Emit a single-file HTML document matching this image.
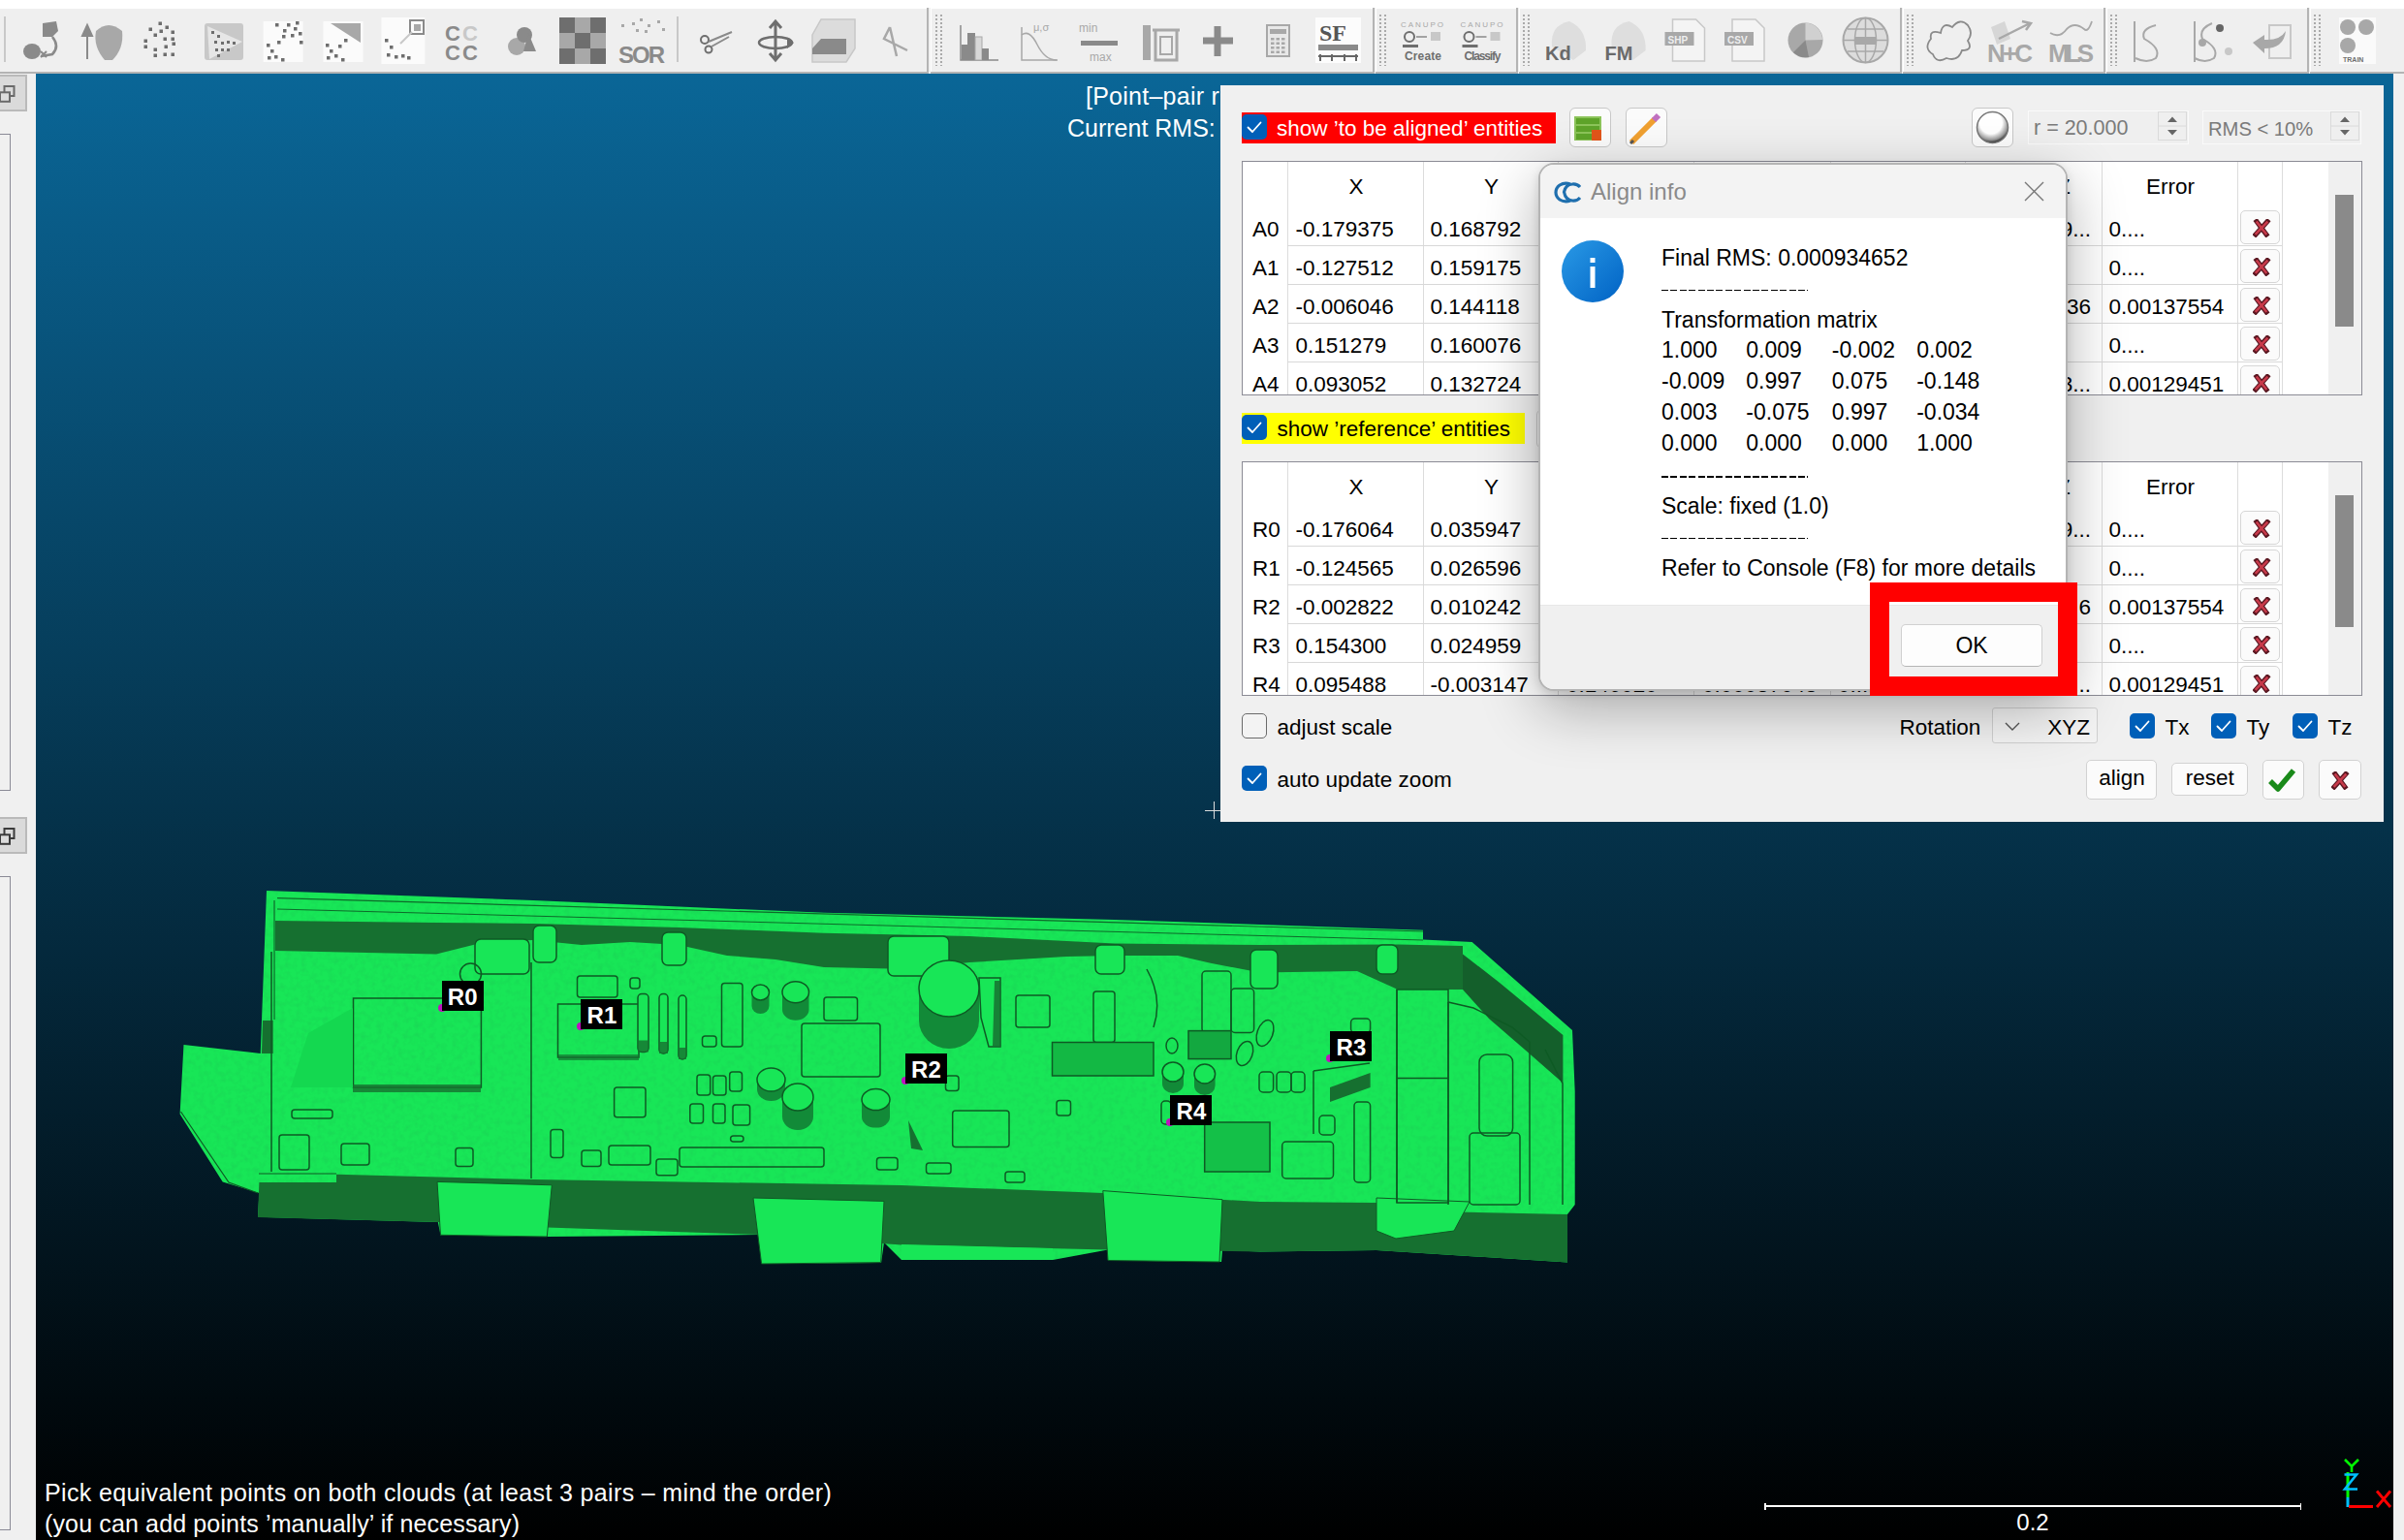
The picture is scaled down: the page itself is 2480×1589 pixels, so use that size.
<!DOCTYPE html>
<html><head><meta charset="utf-8">
<style>
*{box-sizing:border-box;margin:0;padding:0}
html,body{width:2480px;height:1589px;overflow:hidden;background:#f0f0f0;font-family:"Liberation Sans",sans-serif;color:#000;position:relative}
.a{position:absolute}
.t{position:absolute;line-height:1;white-space:nowrap}
.tb{position:absolute;top:8px;height:68px;background:#efefef;border-bottom:2px solid #b4b4b4;border-right:2px solid #b4b4b4;box-shadow:inset 1px 1px 0 #fff}
.hd{position:absolute;top:15px;width:7px;height:53px;background-image:radial-gradient(circle at 1px 1px,#a8a8a8 0.7px,transparent 0.9px);background-size:5px 4px}
.chk{position:absolute;width:26px;height:26px;border-radius:5px;background:#005fb8}
.btn{position:absolute;background:#fdfdfd;border:1px solid #d4d4d4;border-bottom-color:#bdbdbd;border-radius:5px}
.clip{position:absolute;overflow:hidden}
</style></head><body>

<div class="a" style="left:0.0px;top:0.0px;width:2480.0px;height:8.0px;background:#fff"></div>
<div class="tb" style="left:0px;width:958px;box-shadow:inset 0 1px 0 #fff;"></div>
<div class="tb" style="left:960px;width:458px;"></div>
<div class="tb" style="left:1419px;width:147px;"></div>
<div class="tb" style="left:1567px;width:395px;"></div>
<div class="tb" style="left:1963px;width:209px;"></div>
<div class="tb" style="left:2173px;width:209px;"></div>
<div class="tb" style="left:2383px;width:97px;border-right:none;"></div>
<div class="hd" style="left:965px"></div>
<div class="hd" style="left:1423px"></div>
<div class="hd" style="left:1571px"></div>
<div class="hd" style="left:1967px"></div>
<div class="hd" style="left:2177px"></div>
<div class="hd" style="left:2387px"></div>
<div class="a" style="left:4.0px;top:17.0px;width:2.0px;height:47.0px;background:#c8c8c8"></div>
<div class="a" style="left:698.0px;top:17.0px;width:2.0px;height:47.0px;background:#c8c8c8"></div>
<div class="a" style="left:0.0px;top:76.0px;width:37.0px;height:1513.0px;background:#f0f0f0"></div>
<div class="a" style="left:-2.0px;top:77.0px;width:30.0px;height:38.0px;background:#dadada;border:2px solid #bababa"><svg width="28" height="34" style="position:absolute;left:0;top:0;overflow:visible"><rect x="4.5" y="10" width="10" height="10" fill="none" stroke="#6a6a6a" stroke-width="2"/><rect x="0" y="16.3" width="10" height="9.5" fill="#dcdcdc" stroke="#6a6a6a" stroke-width="2"/></svg></div>
<div class="a" style="left:-2.0px;top:843.0px;width:30.0px;height:38.0px;background:#dadada;border:2px solid #bababa"><svg width="28" height="34" style="position:absolute;left:0;top:0;overflow:visible"><rect x="4.5" y="10" width="10" height="10" fill="none" stroke="#3a3a3a" stroke-width="2"/><rect x="0" y="16.3" width="10" height="9.5" fill="#dcdcdc" stroke="#3a3a3a" stroke-width="2"/></svg></div>
<div class="a" style="left:-2.0px;top:138.0px;width:13.0px;height:678.0px;border:1px solid #8a8a96;background:#f0f0f0"></div>
<div class="a" style="left:-2.0px;top:904.0px;width:13.0px;height:674.5px;border:1px solid #8a8a96;background:#f0f0f0"></div>
<div class="a" style="left:37.0px;top:76.0px;width:2432.0px;height:1513.0px;background:linear-gradient(rgb(10,102,151),rgb(0,0,0));overflow:hidden"></div>
<div class="a" style="left:2469.0px;top:76.0px;width:11.0px;height:1513.0px;background:#f0f0f0"></div>
<svg class="a" style="left:0;top:0" width="2480" height="76" viewBox="0 0 2480 76"><path d="M44 24 L58 22 L60 32 L54 38 L44 38 Z" fill="#8a8a8a"/><ellipse cx="33" cy="53" rx="9" ry="8" fill="#8a8a8a"/><path d="M54 38 Q62 48 54 56 L42 58" fill="none" stroke="#8a8a8a" stroke-width="2.5"/><path d="M42 53 L48 59 M42 59 L48 53" stroke="#8a8a8a" stroke-width="2"/><path d="M90 26 V61 M85 37 L90 26 L95 37 Z" stroke="#8a8a8a" stroke-width="2" fill="#8a8a8a"/><path d="M99 32 Q112 20 126 32 Q128 50 116 62 L108 62 Q96 48 99 32 Z" fill="#a8a8a8"/><rect x="163.5" y="22.5" width="3.5" height="3.5" fill="#6e6e6e"/><rect x="170.5" y="26.5" width="3.5" height="3.5" fill="#6e6e6e"/><rect x="176.5" y="31.5" width="3.5" height="3.5" fill="#6e6e6e"/><rect x="153.5" y="28.5" width="3.5" height="3.5" fill="#6e6e6e"/><rect x="158.5" y="34.5" width="3.5" height="3.5" fill="#6e6e6e"/><rect x="148.5" y="40.5" width="3.5" height="3.5" fill="#6e6e6e"/><rect x="168.5" y="38.5" width="3.5" height="3.5" fill="#6e6e6e"/><rect x="177.5" y="43.5" width="3.5" height="3.5" fill="#6e6e6e"/><rect x="148.5" y="46.5" width="3.5" height="3.5" fill="#6e6e6e"/><rect x="158.5" y="49.5" width="3.5" height="3.5" fill="#6e6e6e"/><rect x="169.5" y="46.5" width="3.5" height="3.5" fill="#6e6e6e"/><rect x="176.5" y="38.5" width="3.5" height="3.5" fill="#6e6e6e"/><rect x="158.5" y="55.5" width="3.5" height="3.5" fill="#6e6e6e"/><rect x="168.5" y="54.5" width="3.5" height="3.5" fill="#6e6e6e"/><rect x="176.5" y="54.5" width="3.5" height="3.5" fill="#6e6e6e"/><rect x="164.5" y="30.5" width="3.5" height="3.5" fill="#6e6e6e"/><rect x="211" y="24" width="40" height="38" rx="3" fill="#c8c8c8"/><path d="M214 27 L250 43 L216 61 Z" fill="#e6e6e6"/><rect x="218" y="32" width="3" height="3" fill="#6e6e6e"/><rect x="224" y="36" width="3" height="3" fill="#6e6e6e"/><rect x="221" y="42" width="3" height="3" fill="#6e6e6e"/><rect x="228" y="43" width="3" height="3" fill="#6e6e6e"/><rect x="234" y="42" width="3" height="3" fill="#6e6e6e"/><rect x="240" y="43" width="3" height="3" fill="#6e6e6e"/><rect x="222" y="50" width="3" height="3" fill="#6e6e6e"/><rect x="228" y="50" width="3" height="3" fill="#6e6e6e"/><rect x="234" y="50" width="3" height="3" fill="#6e6e6e"/><rect x="224" y="56" width="3" height="3" fill="#6e6e6e"/><rect x="271.6" y="22" width="41" height="42" fill="#fbfbfb"/><rect x="333.5" y="22" width="41" height="42" fill="#fbfbfb"/><rect x="393.4" y="18" width="45" height="48" fill="#fbfbfb"/><rect x="284" y="24" width="3.5" height="3.5" fill="#6e6e6e"/><rect x="296" y="24" width="3.5" height="3.5" fill="#6e6e6e"/><rect x="305" y="22" width="3.5" height="3.5" fill="#6e6e6e"/><rect x="292" y="30" width="3.5" height="3.5" fill="#6e6e6e"/><rect x="303" y="28" width="3.5" height="3.5" fill="#6e6e6e"/><rect x="300" y="35" width="3.5" height="3.5" fill="#6e6e6e"/><rect x="308" y="33" width="3.5" height="3.5" fill="#6e6e6e"/><rect x="275" y="45" width="3.5" height="3.5" fill="#6e6e6e"/><rect x="286" y="42" width="3.5" height="3.5" fill="#6e6e6e"/><rect x="291" y="36" width="3.5" height="3.5" fill="#6e6e6e"/><rect x="279" y="51" width="3.5" height="3.5" fill="#6e6e6e"/><rect x="276" y="58" width="3.5" height="3.5" fill="#6e6e6e"/><rect x="283" y="57" width="3.5" height="3.5" fill="#6e6e6e"/><rect x="290" y="60" width="3.5" height="3.5" fill="#6e6e6e"/><rect x="309" y="42" width="3.5" height="3.5" fill="#6e6e6e"/><path d="M341 24 L372 24 L372 44 Z" fill="#a8a8a8"/><rect x="336" y="45" width="3.5" height="3.5" fill="#6e6e6e"/><rect x="340" y="51" width="3.5" height="3.5" fill="#6e6e6e"/><rect x="337" y="58" width="3.5" height="3.5" fill="#6e6e6e"/><rect x="345" y="56" width="3.5" height="3.5" fill="#6e6e6e"/><rect x="352" y="60" width="3.5" height="3.5" fill="#6e6e6e"/><rect x="349" y="46" width="3.5" height="3.5" fill="#6e6e6e"/><rect x="355" y="40" width="3.5" height="3.5" fill="#6e6e6e"/><rect x="423" y="21" width="14" height="14" fill="none" stroke="#8a8a8a" stroke-width="2"/><rect x="427" y="25" width="7" height="7" fill="#a8a8a8"/><path d="M413 45 L425 33" stroke="#c8c8c8" stroke-width="2"/><rect x="397" y="40" width="3.5" height="3.5" fill="#6e6e6e"/><rect x="402" y="47" width="3.5" height="3.5" fill="#6e6e6e"/><rect x="399" y="55" width="3.5" height="3.5" fill="#6e6e6e"/><rect x="407" y="57" width="3.5" height="3.5" fill="#6e6e6e"/><rect x="414" y="56" width="3.5" height="3.5" fill="#6e6e6e"/><rect x="420" y="58" width="3.5" height="3.5" fill="#6e6e6e"/><text x="459" y="42" font-family="Liberation Sans" font-weight="bold" font-size="22" fill="#8a8a8a">C</text><text x="477" y="42" font-family="Liberation Sans" font-weight="bold" font-size="22" fill="#c8c8c8">C</text><text x="459" y="62" font-family="Liberation Sans" font-weight="bold" font-size="22" fill="#8a8a8a" textLength="34">CC</text><circle cx="533" cy="48" r="9" fill="#a8a8a8"/><circle cx="541" cy="36" r="8" fill="#8a8a8a"/><path d="M545 34 L553 53 L540 53 Z" fill="#8a8a8a"/><rect x="577" y="18" width="16" height="16" fill="#6e6e6e"/><rect x="577" y="34" width="16" height="16" fill="#a8a8a8"/><rect x="577" y="50" width="16" height="16" fill="#6e6e6e"/><rect x="593" y="18" width="16" height="16" fill="#a8a8a8"/><rect x="593" y="34" width="16" height="16" fill="#6e6e6e"/><rect x="593" y="50" width="16" height="16" fill="#a8a8a8"/><rect x="609" y="18" width="16" height="16" fill="#6e6e6e"/><rect x="609" y="34" width="16" height="16" fill="#a8a8a8"/><rect x="609" y="50" width="16" height="16" fill="#6e6e6e"/><text x="638" y="65" font-family="Liberation Sans" font-weight="bold" font-size="24" fill="#8a8a8a" textLength="48">SOR</text><rect x="641" y="25" width="3" height="3" fill="#a8a8a8"/><rect x="652" y="23" width="3" height="3" fill="#a8a8a8"/><rect x="660" y="19" width="3" height="3" fill="#a8a8a8"/><rect x="668" y="25" width="3" height="3" fill="#a8a8a8"/><rect x="678" y="21" width="3" height="3" fill="#a8a8a8"/><rect x="665" y="31" width="3" height="3" fill="#a8a8a8"/><rect x="656" y="30" width="3" height="3" fill="#a8a8a8"/><rect x="683" y="29" width="3" height="3" fill="#a8a8a8"/><circle cx="727" cy="41" r="4" fill="none" stroke="#6e6e6e" stroke-width="2"/><circle cx="731" cy="51" r="3.5" fill="none" stroke="#6e6e6e" stroke-width="2"/><path d="M731 43 L755 33 M734 48 L752 38" stroke="#8a8a8a" stroke-width="2"/><path d="M800 22 V62 M794 29 L800 22 L806 29 M794 55 L800 62 L806 55" fill="none" stroke="#6e6e6e" stroke-width="3"/><ellipse cx="800" cy="44" rx="17" ry="6" fill="none" stroke="#6e6e6e" stroke-width="2.5"/><path d="M812 40 L819 44 L812 50 Z" fill="#6e6e6e"/><path d="M838 36 L847 20 L882 20 L882 50 L873 64 L838 64 Z" fill="#dcdcdc" stroke="#c8c8c8" stroke-width="1.5"/><path d="M838 50 L847 40 L873 40 L873 56 L838 56 Z" fill="#8a8a8a"/><path d="M918 28 L912 40 L936 52 M918 28 L925 58" fill="none" stroke="#a8a8a8" stroke-width="2.5"/><path d="M991 26 V62 H1030" fill="none" stroke="#8a8a8a" stroke-width="1.5"/><rect x="992" y="46" width="6" height="16" fill="#8a8a8a"/><rect x="998" y="34" width="8" height="28" fill="#8a8a8a"/><rect x="1006" y="38" width="7" height="24" fill="#d8d8d8" stroke="#a8a8a8"/><rect x="1013" y="50" width="7" height="12" fill="#8a8a8a"/><path d="M1054 28 V62 H1091" fill="none" stroke="#a8a8a8" stroke-width="1.5"/><path d="M1054 36 Q1062 30 1070 46 Q1078 62 1090 62" fill="none" stroke="#a8a8a8" stroke-width="1.5"/><text x="1066" y="32" font-size="11" fill="#a8a8a8" font-family="Liberation Sans">&#956;,&#963;</text><text x="1113" y="33" font-size="12" fill="#a8a8a8" font-family="Liberation Sans">min</text><text x="1124" y="63" font-size="12" fill="#a8a8a8" font-family="Liberation Sans">max</text><rect x="1115" y="42" width="38" height="5" fill="#8a8a8a"/><rect x="1179" y="26" width="8" height="36" fill="#a8a8a8"/><path d="M1189 31 H1217 M1192 31 V62 H1214 V31" fill="none" stroke="#a8a8a8" stroke-width="3"/><rect x="1197" y="38" width="12" height="18" fill="none" stroke="#a8a8a8" stroke-width="2"/><path d="M1256 27 V58 M1241 42 H1272" stroke="#8a8a8a" stroke-width="7"/><rect x="1307" y="26" width="23" height="32" fill="#e8e8e8" stroke="#a8a8a8" stroke-width="2"/><rect x="1310" y="30" width="17" height="5" fill="#a8a8a8"/><rect x="1311.0" y="39.0" width="3.5" height="2.5" fill="#a8a8a8"/><rect x="1311.0" y="43.5" width="3.5" height="2.5" fill="#a8a8a8"/><rect x="1311.0" y="48.0" width="3.5" height="2.5" fill="#a8a8a8"/><rect x="1311.0" y="52.5" width="3.5" height="2.5" fill="#a8a8a8"/><rect x="1316.5" y="39.0" width="3.5" height="2.5" fill="#a8a8a8"/><rect x="1316.5" y="43.5" width="3.5" height="2.5" fill="#a8a8a8"/><rect x="1316.5" y="48.0" width="3.5" height="2.5" fill="#a8a8a8"/><rect x="1316.5" y="52.5" width="3.5" height="2.5" fill="#a8a8a8"/><rect x="1322.0" y="39.0" width="3.5" height="2.5" fill="#a8a8a8"/><rect x="1322.0" y="43.5" width="3.5" height="2.5" fill="#a8a8a8"/><rect x="1322.0" y="48.0" width="3.5" height="2.5" fill="#a8a8a8"/><rect x="1322.0" y="52.5" width="3.5" height="2.5" fill="#a8a8a8"/><rect x="1357" y="18" width="47" height="47" fill="#fcfcfc"/><text x="1361" y="42" font-family="Liberation Serif" font-weight="bold" font-size="24" fill="#555">SF</text><rect x="1360" y="46" width="41" height="6" fill="#8a8a8a"/><path d="M1360 58 H1401 M1362 56 V63 M1374 56 V63 M1387 56 V63 M1399 56 V63" stroke="#666" stroke-width="2"/><text x="1445" y="28" font-size="8" fill="#a8a8a8" font-family="Liberation Sans" textLength="44">CANUPO</text><rect x="1449" y="33" width="10" height="10" rx="5" fill="none" stroke="#6e6e6e" stroke-width="2"/><path d="M1461 38 H1472" stroke="#8a8a8a" stroke-width="1.5"/><rect x="1476" y="33" width="10" height="9" fill="#c8c8c8"/><rect x="1447" y="46" width="16" height="3" fill="#6e6e6e"/><text x="1449" y="62" font-size="12" font-weight="bold" fill="#6e6e6e" font-family="Liberation Sans" textLength="38">Create</text><text x="1506.5" y="28" font-size="8" fill="#a8a8a8" font-family="Liberation Sans" textLength="44">CANUPO</text><rect x="1510.5" y="33" width="10" height="10" rx="5" fill="none" stroke="#6e6e6e" stroke-width="2"/><path d="M1522.5 38 H1533.5" stroke="#8a8a8a" stroke-width="1.5"/><rect x="1537.5" y="33" width="10" height="9" fill="#c8c8c8"/><rect x="1508.5" y="46" width="16" height="3" fill="#6e6e6e"/><text x="1510.5" y="62" font-size="12" font-weight="bold" fill="#6e6e6e" font-family="Liberation Sans" textLength="38">Classify</text><path d="M1601 48 Q1599 26 1619 22 Q1637 30 1636 52 L1623 62 Z" fill="#dedede"/><text x="1594" y="62" font-size="20" font-weight="bold" fill="#6a6a6a" font-family="Liberation Sans">Kd</text><path d="M1662.6 48 Q1660.6 26 1680.6 22 Q1698.6 30 1697.6 52 L1684.6 62 Z" fill="#dedede"/><text x="1655.6" y="62" font-size="20" font-weight="bold" fill="#6a6a6a" font-family="Liberation Sans">FM</text><path d="M1725.5 20 H1749.5 L1758.5 29 V63 H1725.5 Z" fill="#f4f4f4" stroke="#c8c8c8" stroke-width="1.5"/><rect x="1717.5" y="33" width="30" height="14" fill="#a8a8a8"/><text x="1720.5" y="45" font-size="10" fill="#eee" font-family="Liberation Sans" font-weight="bold">SHP</text><path d="M1787 20 H1811 L1820 29 V63 H1787 Z" fill="#f4f4f4" stroke="#c8c8c8" stroke-width="1.5"/><rect x="1779" y="33" width="30" height="14" fill="#a8a8a8"/><text x="1782" y="45" font-size="10" fill="#eee" font-family="Liberation Sans" font-weight="bold">CSV</text><circle cx="1862.5" cy="41.5" r="18" fill="#a8a8a8"/><path d="M1862.5 41.5 L1862.5 23.5 A18 18 0 0 1 1880 41 Z" fill="#d0d0d0"/><path d="M1862.5 41.5 L1850 54 A18 18 0 0 0 1866 59 Z" fill="#8a8a8a"/><circle cx="1924.5" cy="41.5" r="23" fill="#dcdcdc" stroke="#a8a8a8" stroke-width="2"/><path d="M1902 41.5 H1947 M1924.5 19 V64 M1906 30 H1943 M1906 53 H1943" stroke="#a8a8a8" stroke-width="1.5"/><ellipse cx="1924.5" cy="41.5" rx="11" ry="23" fill="none" stroke="#a8a8a8" stroke-width="1.5"/><rect x="1914" y="38" width="21" height="8" fill="#a8a8a8"/><path d="M1992 40 Q1990 30 2002 34 Q2004 22 2014 28 Q2022 18 2030 26 Q2036 34 2030 42 Q2036 52 2024 52 Q2020 64 2008 60 Q1998 66 1994 56 Q1984 50 1992 40 Z" fill="none" stroke="#8a8a8a" stroke-width="1.8"/><path d="M2054 28 L2068 22 L2074 40 L2060 46 Z" fill="#d6d6d6"/><path d="M2062 40 L2094 24 M2086 22 L2095 24 L2090 31" fill="none" stroke="#a8a8a8" stroke-width="2.5"/><text x="2050" y="64" font-size="26" font-weight="bold" fill="#a8a8a8" font-family="Liberation Sans" textLength="47">N+C</text><path d="M2115 34 Q2125 40 2132 30 Q2140 22 2150 30 Q2154 34 2158 22" fill="none" stroke="#a8a8a8" stroke-width="1.8"/><text x="2113" y="64" font-size="26" font-weight="bold" fill="#a8a8a8" font-family="Liberation Sans" textLength="47">MLS</text><path d="M2202 22 V64 M2224 26 Q2208 30 2212 40 Q2230 50 2224 60 Q2215 66 2203 60" fill="none" stroke="#a8a8a8" stroke-width="2"/><path d="M2264 22 V64 M2282 24 Q2268 30 2272 40 Q2290 50 2284 60 Q2275 66 2264 60" fill="none" stroke="#a8a8a8" stroke-width="2"/><circle cx="2290" cy="29" r="4" fill="#666"/><circle cx="2272" cy="44" r="4" fill="#a8a8a8"/><circle cx="2299" cy="53" r="4" fill="#c8c8c8"/><rect x="2341" y="26" width="22" height="34" fill="none" stroke="#c8c8c8" stroke-width="2"/><path d="M2324 44 L2336 36 V41 Q2352 42 2358 32 Q2356 50 2336 50 V55 Z" fill="#a8a8a8"/><rect x="2413" y="18" width="38" height="48" fill="#fafafa"/><circle cx="2422" cy="28" r="8" fill="#a8a8a8"/><circle cx="2441" cy="28" r="8" fill="#a8a8a8"/><circle cx="2422" cy="47" r="8" fill="#a8a8a8"/><text x="2417" y="64" font-size="7" fill="#6e6e6e" font-family="Liberation Sans" font-weight="bold">TRAIN</text></svg>
<div class="t" style="left:1120.0px;top:86.8px;font-size:25px;color:#fff;letter-spacing:0.25px">[Point&#8211;pair r</div>
<div class="t" style="left:1101.0px;top:120.0px;font-size:25px;color:#fff;">Current RMS:</div>
<div class="t" style="left:46.0px;top:1527.5px;font-size:25px;color:#fff;letter-spacing:0.35px">Pick equivalent points on both clouds (at least 3 pairs &#8211; mind the order)</div>
<div class="t" style="left:46.0px;top:1560.3px;font-size:25px;color:#fff;letter-spacing:0.14px">(you can add points &#8217;manually&#8217; if necessary)</div>
<div class="a" style="left:1820.4px;top:1553.3px;width:554.0px;height:1.6px;background:#fff"></div>
<div class="a" style="left:1820.4px;top:1550.5px;width:1.4px;height:7.0px;background:#fff"></div>
<div class="a" style="left:2373.0px;top:1550.5px;width:1.4px;height:7.0px;background:#fff"></div>
<div class="t" style="left:1797.0px;width:600px;text-align:center;top:1558.7px;font-size:24px;color:#fff;">0.2</div>
<svg class="a" style="left:2410px;top:1500px" width="60" height="60"><path d="M12 19 V45" stroke="#00ff00" stroke-width="3"/><path d="M12 45 V55" stroke="#00c0ff" stroke-width="3"/><path d="M13 54.5 H38" stroke="#ff0000" stroke-width="3"/><path d="M9 6 L16 13 L23 6 M16 13 V19" fill="none" stroke="#00ff00" stroke-width="2.6"/><path d="M8.5 21.5 H21 L9 36.5 H22" fill="none" stroke="#00c0ff" stroke-width="2.6"/><path d="M42 38.5 L56 55 M56 38.5 L42 55" fill="none" stroke="#ff0000" stroke-width="2.8"/></svg>
<div class="a" style="left:1243.0px;top:836.0px;width:18.0px;height:1.0px;background:#ddd"></div>
<div class="a" style="left:1252.0px;top:827.0px;width:1.0px;height:18.0px;background:#ddd"></div>
<svg class="a" style="left:0;top:0" width="2480" height="1589" viewBox="0 0 2480 1589">
<polygon points="275.0,919.0 550.0,929.0 850.0,941.8 1150.0,949.0 1330.0,955.0 1468.0,959.7 1468.0,969.6 1518.6,972.0 1622.0,1063.0 1624.7,1126.0 1624.7,1243.0 1617.0,1253.0 1617.0,1302.5 1420.0,1290.0 1300.0,1291.4 1261.0,1290.0 1260.0,1302.0 1143.0,1300.5 1143.0,1289.6 1086.0,1300.0 930.0,1300.0 912.0,1282.0 909.0,1303.0 786.0,1304.0 784.0,1274.0 564.0,1276.0 454.5,1274.3 451.8,1261.0 266.0,1255.8 267.4,1231.0 229.7,1219.5 185.6,1149.4 189.5,1078.0 268.7,1087.0 275.0,919.0" fill="#18e657"/>
<defs><filter id="nz" x="0" y="0" width="100%" height="100%"><feTurbulence type="fractalNoise" baseFrequency="0.18" numOctaves="2" seed="7"/><feColorMatrix type="matrix" values="0 0 0 0 0.02  0 0 0 0 0.25  0 0 0 0 0.08  0 0 0 -2.2 1.25"/></filter><clipPath id="cl"><polygon points="275.0,919.0 550.0,929.0 850.0,941.8 1150.0,949.0 1330.0,955.0 1468.0,959.7 1468.0,969.6 1518.6,972.0 1622.0,1063.0 1624.7,1126.0 1624.7,1243.0 1617.0,1253.0 1617.0,1302.5 1420.0,1290.0 1300.0,1291.4 1261.0,1290.0 1260.0,1302.0 1143.0,1300.5 1143.0,1289.6 1086.0,1300.0 930.0,1300.0 912.0,1282.0 909.0,1303.0 786.0,1304.0 784.0,1274.0 564.0,1276.0 454.5,1274.3 451.8,1261.0 266.0,1255.8 267.4,1231.0 229.7,1219.5 185.6,1149.4 189.5,1078.0 268.7,1087.0 275.0,919.0"/></clipPath></defs>
<rect x="180" y="915" width="1450" height="390" filter="url(#nz)" clip-path="url(#cl)" opacity="0.12"/>
<polygon points="284.0,950.0 450.0,952.0 550.0,953.0 700.0,957.0 850.0,962.7 1000.0,966.0 1150.0,973.6 1300.0,975.0 1442.0,974.5 1509.0,976.0 1509.0,1021.0 1442.0,1021.0 1400.0,1002.0 1300.0,1003.6 1250.0,994.0 1215.0,986.0 1150.0,986.0 1100.0,987.0 1000.0,993.0 940.0,1000.0 850.0,998.0 800.0,990.0 750.0,986.0 700.0,975.0 650.0,972.0 600.0,975.0 550.0,970.0 500.0,972.0 450.0,984.5 284.0,981.0" fill="#167030"/>
<polygon points="1509.0,984.4 1547.0,1014.0 1612.4,1068.0 1612.4,1117.6 1573.0,1083.0 1536.0,1051.0 1509.0,1021.0" fill="#145f2b"/>
<polygon points="267.4,1220.0 347.0,1220.0 347.0,1211.7 550.0,1217.0 930.0,1223.0 1138.0,1231.0 1300.0,1240.0 1420.0,1241.0 1511.0,1250.7 1617.0,1253.0 1617.0,1302.5 1420.0,1290.0 1300.0,1291.4 1143.0,1289.6 930.0,1284.4 784.0,1274.0 550.0,1266.0 452.0,1261.0 266.0,1256.0" fill="#167030"/>
<polygon points="451.0,1219.4 569.3,1222.8 564.3,1276.0 454.5,1274.3" fill="#18e657" stroke="#0e5a24" stroke-width="1"/>
<polygon points="777.0,1236.0 912.0,1239.4 908.7,1302.6 785.6,1304.0" fill="#18e657" stroke="#0e5a24" stroke-width="1"/>
<polygon points="1137.8,1228.6 1261.0,1237.7 1258.0,1302.0 1143.0,1300.5" fill="#18e657" stroke="#0e5a24" stroke-width="1"/>
<polygon points="1420.0,1236.0 1516.0,1240.0 1500.0,1270.0 1440.0,1278.0 1420.0,1270.0" fill="#18e657" stroke="#0e5a24" stroke-width="1"/>
<polygon points="930.0,1284.0 1086.0,1288.0 1086.0,1300.0 930.0,1300.0" fill="#18e657"/>
<polygon points="271.0,1053.0 281.7,1053.0 281.7,1087.0 270.0,1087.0" fill="#167030"/>
<polygon points="1372.0,1122.0 1413.6,1107.0 1413.6,1122.0 1372.0,1137.0" fill="#167030"/>
<rect x="490" y="969" width="56" height="36" rx="6" fill="#18e657" stroke="#0e5a24" stroke-width="1.5"/>
<rect x="550" y="955" width="24" height="38" rx="6" fill="#18e657" stroke="#0e5a24" stroke-width="1.5"/>
<rect x="683" y="962" width="25" height="34" rx="6" fill="#18e657" stroke="#0e5a24" stroke-width="1.5"/>
<rect x="916" y="966" width="63" height="41" rx="6" fill="#18e657" stroke="#0e5a24" stroke-width="1.5"/>
<rect x="1130" y="975" width="30" height="30" rx="6" fill="#18e657" stroke="#0e5a24" stroke-width="1.5"/>
<rect x="1290" y="980" width="28" height="40" rx="6" fill="#18e657" stroke="#0e5a24" stroke-width="1.5"/>
<rect x="1420" y="975" width="22" height="30" rx="6" fill="#18e657" stroke="#0e5a24" stroke-width="1.5"/>
<path d="M280 982 V1209 M548 993 V1216 M1441 1021 V1241 M1494 1034 V1243" fill="none" stroke="#0e5a24" stroke-width="1.5"/>
<path d="M286 926.6 L1468 961" stroke="#0e6a2a" stroke-width="1.2"/><path d="M286 938 L1468 970" stroke="#0e6a2a" stroke-width="1"/><path d="M283 929 V1052" stroke="#0e6a2a" stroke-width="1.2"/>
<circle cx="485.5" cy="1005" r="11" fill="none" stroke="#0e5a24" stroke-width="1.5"/>
<path d="M364.5 1030 H496.4 V1122 H364.5 Z" fill="none" stroke="#0e5a24" stroke-width="1.5"/><path d="M364 1119 H496 V1127 H364 Z" fill="#167030" opacity="0.8"/>
<path d="M318 1066 L364 1040 L364 1122 L300 1122 Z" fill="#14d850"/>
<path d="M186.5 1147 L236 1220 L266 1231" fill="none" stroke="#0e5a24" stroke-width="1.2"/><path d="M267 1211 H347" stroke="#0e5a24" stroke-width="1"/>
<rect x="288" y="1171" width="31" height="36" rx="3" fill="none" stroke="#0e5a24" stroke-width="1.5"/>
<rect x="352" y="1180" width="29" height="22" rx="3" fill="none" stroke="#0e5a24" stroke-width="1.5"/>
<rect x="470" y="1184.5" width="18" height="19" rx="3" fill="none" stroke="#0e5a24" stroke-width="1.5"/>
<rect x="301" y="1145" width="42" height="9" rx="3" fill="none" stroke="#0e5a24" stroke-width="1.5"/>
<path d="M575.5 1036 H659 V1091 H575.5 Z" fill="none" stroke="#0e5a24" stroke-width="1.5"/><path d="M576 1088 H659 V1094 H576 Z" fill="#167030" opacity="0.7"/>
<rect x="595.5" y="1007" width="41.5" height="22" rx="3" fill="none" stroke="#0e5a24" stroke-width="1.5"/>
<rect x="650" y="1009" width="10" height="11" rx="3" fill="none" stroke="#0e5a24" stroke-width="1.5"/>
<rect x="724.5" y="1069" width="14.5" height="11" rx="3" fill="none" stroke="#0e5a24" stroke-width="1.5"/>
<rect x="744.5" y="1014.5" width="21.5" height="65.5" rx="3" fill="none" stroke="#0e5a24" stroke-width="1.5"/>
<rect x="719" y="1109" width="13.7" height="21" rx="3" fill="none" stroke="#0e5a24" stroke-width="1.5"/>
<rect x="735.5" y="1110" width="13.5" height="20" rx="3" fill="none" stroke="#0e5a24" stroke-width="1.5"/>
<rect x="752.7" y="1106" width="12.8" height="20" rx="3" fill="none" stroke="#0e5a24" stroke-width="1.5"/>
<rect x="711.8" y="1139" width="13.7" height="20" rx="3" fill="none" stroke="#0e5a24" stroke-width="1.5"/>
<rect x="735.5" y="1139" width="12.5" height="20" rx="3" fill="none" stroke="#0e5a24" stroke-width="1.5"/>
<rect x="756" y="1140" width="17.6" height="21" rx="3" fill="none" stroke="#0e5a24" stroke-width="1.5"/>
<rect x="633.6" y="1122" width="32.4" height="30.7" rx="3" fill="none" stroke="#0e5a24" stroke-width="1.5"/>
<rect x="568" y="1165.5" width="13" height="29" rx="3" fill="none" stroke="#0e5a24" stroke-width="1.5"/>
<rect x="600" y="1187" width="20" height="16.6" rx="3" fill="none" stroke="#0e5a24" stroke-width="1.5"/>
<rect x="628" y="1182" width="43" height="20" rx="3" fill="none" stroke="#0e5a24" stroke-width="1.5"/>
<rect x="677" y="1196" width="22" height="16.7" rx="3" fill="none" stroke="#0e5a24" stroke-width="1.5"/>
<rect x="701" y="1184" width="149" height="20" rx="3" fill="none" stroke="#0e5a24" stroke-width="1.5"/>
<rect x="753.6" y="1172" width="13.4" height="6" rx="3" fill="none" stroke="#0e5a24" stroke-width="1.5"/>
<rect x="658" y="1025.5" width="11" height="60" rx="4" fill="#18e657" stroke="#0e5a24" stroke-width="1.5"/><rect x="658" y="1073.5" width="11" height="12" fill="#167030" opacity="0.8"/>
<rect x="680" y="1025.5" width="9" height="61.5" rx="4" fill="#18e657" stroke="#0e5a24" stroke-width="1.5"/><rect x="680" y="1075.0" width="9" height="12" fill="#167030" opacity="0.8"/>
<rect x="700" y="1027" width="8" height="66" rx="4" fill="#18e657" stroke="#0e5a24" stroke-width="1.5"/><rect x="700" y="1081" width="8" height="12" fill="#167030" opacity="0.8"/>
<path d="M775.5 1024.0 V1038.0 A9.0 8.0 0 0 0 793.5 1038.0 V1024.0 Z" fill="#128a38"/>
<ellipse cx="784.5" cy="1024.0" rx="9.0" ry="8.0" fill="#18e657" stroke="#0e5a24" stroke-width="1.5"/>
<path d="M807 1023.7 V1041.7 A13.75 11.0 0 0 0 834.5 1041.7 V1023.7 Z" fill="#128a38"/>
<ellipse cx="820.75" cy="1023.7" rx="13.75" ry="11.0" fill="#18e657" stroke="#0e5a24" stroke-width="1.5"/>
<path d="M781 1114.0 V1124.0 A14.5 12.0 0 0 0 810 1124.0 V1114.0 Z" fill="#128a38"/>
<ellipse cx="795.5" cy="1114.0" rx="14.5" ry="12.0" fill="#18e657" stroke="#0e5a24" stroke-width="1.5"/>
<path d="M807 1132.0 V1152.0 A16.0 14.0 0 0 0 839 1152.0 V1132.0 Z" fill="#128a38"/>
<ellipse cx="823.0" cy="1132.0" rx="16.0" ry="14.0" fill="#18e657" stroke="#0e5a24" stroke-width="1.5"/>
<path d="M948 1020.0 V1053.0 A31.0 29.0 0 0 0 1010 1053.0 V1020.0 Z" fill="#128a38"/>
<ellipse cx="979.0" cy="1020.0" rx="31.0" ry="29.0" fill="#18e657" stroke="#0e5a24" stroke-width="1.5"/>
<path d="M889 1134.6 V1152.6 A14.5 11.0 0 0 0 918 1152.6 V1134.6 Z" fill="#128a38"/>
<ellipse cx="903.5" cy="1134.6" rx="14.5" ry="11.0" fill="#18e657" stroke="#0e5a24" stroke-width="1.5"/>
<path d="M1199 1106.0 V1118.0 A11.0 10.0 0 0 0 1221 1118.0 V1106.0 Z" fill="#128a38"/>
<ellipse cx="1210.0" cy="1106.0" rx="11.0" ry="10.0" fill="#18e657" stroke="#0e5a24" stroke-width="1.5"/>
<path d="M1232 1108.0 V1120.0 A10.8 10.0 0 0 0 1253.6 1120.0 V1108.0 Z" fill="#128a38"/>
<ellipse cx="1242.8" cy="1108.0" rx="10.8" ry="10.0" fill="#18e657" stroke="#0e5a24" stroke-width="1.5"/>
<path d="M1010 1009 H1032 V1080 H1020 L1012 1050 Z" fill="#18e657" stroke="#0e5a24" stroke-width="1.5"/><path d="M1026 1012 H1032 V1080 H1024 Z" fill="#167030" opacity="0.85"/>
<rect x="827" y="1056" width="81" height="55" rx="3" fill="none" stroke="#0e5a24" stroke-width="1.5"/>
<rect x="850" y="1029" width="34.5" height="24" rx="3" fill="none" stroke="#0e5a24" stroke-width="1.5"/>
<rect x="975.5" y="1110" width="13.5" height="15.5" rx="3" fill="none" stroke="#0e5a24" stroke-width="1.5"/>
<rect x="1090" y="1135.5" width="14.5" height="15.5" rx="3" fill="none" stroke="#0e5a24" stroke-width="1.5"/>
<rect x="982.7" y="1146" width="58.3" height="37.6" rx="3" fill="none" stroke="#0e5a24" stroke-width="1.5"/>
<rect x="1128" y="1023" width="22" height="52.5" rx="3" fill="none" stroke="#0e5a24" stroke-width="1.5"/>
<rect x="1048" y="1027" width="35" height="33" rx="3" fill="none" stroke="#0e5a24" stroke-width="1.5"/>
<rect x="904.5" y="1194.5" width="21.5" height="12.5" rx="3" fill="none" stroke="#0e5a24" stroke-width="1.5"/>
<rect x="955.5" y="1200" width="25.5" height="11" rx="3" fill="none" stroke="#0e5a24" stroke-width="1.5"/>
<rect x="1037" y="1209" width="20" height="11" rx="3" fill="none" stroke="#0e5a24" stroke-width="1.5"/>
<rect x="1085.5" y="1075.5" width="104.5" height="34.5" fill="#13b844" stroke="#0e5a24" stroke-width="1.5"/>
<path d="M937 1156 L952 1187 L940 1185 Z" fill="#167030"/>
<rect x="1240" y="1002" width="30" height="63.5" rx="4" fill="none" stroke="#0e5a24" stroke-width="1.5"/>
<rect x="1270" y="1020" width="23.6" height="45.5" rx="4" fill="none" stroke="#0e5a24" stroke-width="1.5"/>
<rect x="1299" y="1106" width="14.6" height="21" rx="4" fill="none" stroke="#0e5a24" stroke-width="1.5"/>
<rect x="1317" y="1106" width="15" height="21" rx="4" fill="none" stroke="#0e5a24" stroke-width="1.5"/>
<rect x="1332" y="1106" width="14" height="21" rx="4" fill="none" stroke="#0e5a24" stroke-width="1.5"/>
<rect x="1198" y="1136" width="10" height="24" rx="4" fill="none" stroke="#0e5a24" stroke-width="1.5"/>
<rect x="1397" y="1137" width="16.6" height="83" rx="4" fill="none" stroke="#0e5a24" stroke-width="1.5"/>
<rect x="1393.6" y="1051" width="20" height="14.5" rx="4" fill="none" stroke="#0e5a24" stroke-width="1.5"/>
<rect x="1322.7" y="1178" width="52.8" height="38" rx="4" fill="none" stroke="#0e5a24" stroke-width="1.5"/>
<rect x="1361" y="1151" width="16" height="20" rx="4" fill="none" stroke="#0e5a24" stroke-width="1.5"/>
<rect x="1226" y="1063.6" width="44" height="29" fill="#13a840" stroke="#0e5a24" stroke-width="1.5"/>
<rect x="1242.7" y="1158" width="67.3" height="51" fill="#14c048" stroke="#0e5a24" stroke-width="1.5"/>
<ellipse cx="1305" cy="1066" rx="8" ry="14" transform="rotate(20 1305 1066)" fill="none" stroke="#0e5a24" stroke-width="1.5"/><ellipse cx="1284" cy="1087" rx="8" ry="13" transform="rotate(20 1284 1087)" fill="none" stroke="#0e5a24" stroke-width="1.5"/><ellipse cx="1209" cy="1079" rx="6" ry="8" fill="none" stroke="#0e5a24" stroke-width="1.5"/>
<path d="M1183 1000 Q1200 1030 1190 1060" fill="none" stroke="#0e5a24" stroke-width="1.5"/>
<path d="M1355 1105 L1413 1097 M1355 1105 V1170" fill="none" stroke="#0e5a24" stroke-width="1.5"/>
<path d="M1441 1021 H1494 V1241 H1441 Z M1441 1112.6 H1494" fill="none" stroke="#0e5a24" stroke-width="1.5"/>
<path d="M1494 1034 L1520 1040 L1560 1060 L1578 1075 V1243 M1594 1083 L1612 1118 V1243" fill="none" stroke="#0e5a24" stroke-width="1.5"/>
<rect x="1526" y="1088" width="34.6" height="84" rx="8" fill="none" stroke="#0e5a24" stroke-width="1.5"/><rect x="1516" y="1169" width="52" height="74" rx="4" fill="none" stroke="#0e5a24" stroke-width="1.5"/>
</svg>
<div class="a" style="left:451.7px;top:1036.2px;width:8.0px;height:8.0px;background:#c010c0;border-radius:50%"></div>
<div class="a" style="left:455.7px;top:1012.2px;width:43.0px;height:31.0px;background:#000"></div>
<div class="t" style="left:177.2px;width:600px;text-align:center;top:1016.9px;font-size:24px;color:#fff;font-weight:bold;">R0</div>
<div class="a" style="left:595.4px;top:1055.2px;width:8.0px;height:8.0px;background:#c010c0;border-radius:50%"></div>
<div class="a" style="left:599.4px;top:1031.2px;width:43.0px;height:31.0px;background:#000"></div>
<div class="t" style="left:320.9px;width:600px;text-align:center;top:1035.9px;font-size:24px;color:#fff;font-weight:bold;">R1</div>
<div class="a" style="left:929.9px;top:1111.0px;width:8.0px;height:8.0px;background:#c010c0;border-radius:50%"></div>
<div class="a" style="left:933.9px;top:1087.0px;width:43.0px;height:31.0px;background:#000"></div>
<div class="t" style="left:655.4px;width:600px;text-align:center;top:1091.7px;font-size:24px;color:#fff;font-weight:bold;">R2</div>
<div class="a" style="left:1368.4px;top:1088.3px;width:8.0px;height:8.0px;background:#c010c0;border-radius:50%"></div>
<div class="a" style="left:1372.4px;top:1064.3px;width:43.0px;height:31.0px;background:#000"></div>
<div class="t" style="left:1093.9px;width:600px;text-align:center;top:1069.0px;font-size:24px;color:#fff;font-weight:bold;">R3</div>
<div class="a" style="left:1203.4px;top:1153.9px;width:8.0px;height:8.0px;background:#c010c0;border-radius:50%"></div>
<div class="a" style="left:1207.4px;top:1129.9px;width:43.0px;height:31.0px;background:#000"></div>
<div class="t" style="left:928.9px;width:600px;text-align:center;top:1134.6px;font-size:24px;color:#fff;font-weight:bold;">R4</div>
<div class="a" style="left:1259.0px;top:88.0px;width:1200.0px;height:760.0px;background:#f0f0f0"></div>
<div class="a" style="left:1281.0px;top:116.0px;width:324.0px;height:32.0px;background:#ff0000"></div>
<div class="chk" style="left:1281.0px;top:118.0px"><svg width="26" height="26" style="position:absolute;left:0;top:0"><path d="M6.5 13.5 L11 18 L19.5 8.5" fill="none" stroke="#fff" stroke-width="1.8" stroke-linecap="round" stroke-linejoin="round"/></svg></div>
<div class="t" style="left:1317.0px;top:122.0px;font-size:22.5px;color:#fff;">show &#8217;to be aligned&#8217; entities</div>
<div class="a" style="left:1618.6px;top:111.3px;width:43.0px;height:41.0px;background:#fbfbfb;border:1px solid #c8c8c8;border-radius:6px"><svg width="43" height="41" style="position:absolute;left:-1px;top:-1px"><rect x="5" y="9" width="28" height="25" fill="#8cc45a"/><rect x="7" y="11" width="24" height="6" fill="#5ea42a"/><rect x="7" y="19" width="24" height="6" fill="#5ea42a"/><rect x="7" y="27" width="24" height="6" fill="#5ea42a"/><path d="M23 23 h10 v11 h-10z" fill="#e2561a"/></svg></div>
<div class="a" style="left:1676.5px;top:111.3px;width:43.0px;height:41.0px;background:#fbfbfb;border:1px solid #c8c8c8;border-radius:6px"><svg width="43" height="41" style="position:absolute;left:-1px;top:-1px"><path d="M6 36 L30 12" stroke="#f0a030" stroke-width="6"/><path d="M29 13 L34 8" stroke="#c070c0" stroke-width="6"/><path d="M5 37 L8 34" stroke="#555" stroke-width="3"/></svg></div>
<div class="a" style="left:2034.4px;top:111.3px;width:43.0px;height:41.0px;background:#fbfbfb;border:1px solid #c8c8c8;border-radius:6px"><svg width="43" height="41" style="position:absolute;left:-1px;top:-1px"><defs><radialGradient id="sph" cx="0.45" cy="0.35" r="0.65"><stop offset="0.55" stop-color="#fff"/><stop offset="0.85" stop-color="#999"/><stop offset="1" stop-color="#222"/></radialGradient></defs><circle cx="21.5" cy="20.5" r="16" fill="url(#sph)" stroke="#777" stroke-width="1.5"/></svg></div>
<div class="a" style="left:2092.0px;top:113.5px;width:166.0px;height:35.0px;background:#efefef;border:1px solid #fafafa"></div>
<div class="t" style="left:2098.0px;top:122.3px;font-size:21.5px;color:#7a7a7a;">r = 20.000</div>
<div class="a" style="left:2226.0px;top:115.0px;width:30.0px;height:30.0px;background:#efefef;border:1px solid #dadada"><svg width="30" height="30" style="position:absolute;left:-1px;top:-1px"><path d="M10 11 L15 5.5 L20 11 Z M10 19 L15 24.5 L20 19 Z" fill="#666"/><path d="M1 15 H29" stroke="#dadada" stroke-width="1"/></svg></div>
<div class="a" style="left:2272.0px;top:113.5px;width:164.0px;height:35.0px;background:#efefef;border:1px solid #fafafa"></div>
<div class="t" style="left:2278.0px;top:123.4px;font-size:20.2px;color:#7a7a7a;">RMS &lt; 10%</div>
<div class="a" style="left:2404.0px;top:115.0px;width:30.0px;height:30.0px;background:#efefef;border:1px solid #dadada"><svg width="30" height="30" style="position:absolute;left:-1px;top:-1px"><path d="M10 11 L15 5.5 L20 11 Z M10 19 L15 24.5 L20 19 Z" fill="#666"/><path d="M1 15 H29" stroke="#dadada" stroke-width="1"/></svg></div>
<div class="clip" style="left:1281px;top:165.8px;width:1156px;height:242px;background:#fff;border:1px solid #8b8b95">
<div class="a" style="left:1120.0px;top:-1.0px;width:35.0px;height:242.0px;background:#f0f0f0"></div>
<div class="a" style="left:1127.3px;top:34.3px;width:19.0px;height:136.0px;background:#8a8a8a"></div>
<div class="a" style="left:46.0px;top:-1.0px;width:1.0px;height:242.0px;background:#dcdcdc"></div>
<div class="a" style="left:185.5px;top:-1.0px;width:1.0px;height:242.0px;background:#dcdcdc"></div>
<div class="a" style="left:325.0px;top:-1.0px;width:1.0px;height:242.0px;background:#dcdcdc"></div>
<div class="a" style="left:465.0px;top:-1.0px;width:1.0px;height:242.0px;background:#dcdcdc"></div>
<div class="a" style="left:605.5px;top:-1.0px;width:1.0px;height:242.0px;background:#dcdcdc"></div>
<div class="a" style="left:745.0px;top:-1.0px;width:1.0px;height:242.0px;background:#dcdcdc"></div>
<div class="a" style="left:885.5px;top:-1.0px;width:1.0px;height:242.0px;background:#dcdcdc"></div>
<div class="a" style="left:1026.0px;top:-1.0px;width:1.0px;height:242.0px;background:#dcdcdc"></div>
<div class="a" style="left:1072.0px;top:-1.0px;width:1.0px;height:242.0px;background:#dcdcdc"></div>
<div class="a" style="left:46.0px;top:86.2px;width:1026.0px;height:1.0px;background:#d8d8d8"></div>
<div class="a" style="left:46.0px;top:126.2px;width:1026.0px;height:1.0px;background:#d8d8d8"></div>
<div class="a" style="left:46.0px;top:166.2px;width:1026.0px;height:1.0px;background:#d8d8d8"></div>
<div class="a" style="left:46.0px;top:206.2px;width:1026.0px;height:1.0px;background:#d8d8d8"></div>
<div class="t" style="left:-183.0px;width:600px;text-align:center;top:15.0px;font-size:22.5px;color:#000;">X</div>
<div class="t" style="left:-43.5px;width:600px;text-align:center;top:15.0px;font-size:22.5px;color:#000;">Y</div>
<div class="t" style="left:657.0px;width:600px;text-align:center;top:15.0px;font-size:22.5px;color:#000;">Error</div>
<div class="t" style="left:840.0px;top:15.0px;font-size:22.5px;color:#000;">Z</div>
<div class="t" style="left:10.0px;top:59.0px;font-size:22.5px;color:#000;">A0</div>
<div class="t" style="left:54.5px;top:59.0px;font-size:22.5px;color:#000;">-0.179375</div>
<div class="t" style="left:193.5px;top:59.0px;font-size:22.5px;color:#000;">0.168792</div>
<div class="t" style="left:893.5px;top:59.0px;font-size:22.5px;color:#000;">0....</div>
<div class="t" style="left:275.0px;width:600px;text-align:right;top:59.0px;font-size:22.5px;color:#000;">9...</div>
<div class="a" style="left:1028.6px;top:50.0px;width:41.0px;height:35.0px;background:#fbfbfb;border:1px solid #d6d6d6;border-radius:5px"><svg width="19" height="19" viewBox="0 0 19 19" style="position:absolute;left:12px;top:8px"><path d="M4 2.5 L14 16 M15 2.5 L3 16" stroke="#5a1822" stroke-width="5" stroke-linecap="square"/><path d="M4.5 3.5 L13.5 15 M14.5 3.5 L3.5 15" stroke="#c83a4a" stroke-width="2.6" stroke-linecap="square"/></svg></div>
<div class="t" style="left:10.0px;top:99.0px;font-size:22.5px;color:#000;">A1</div>
<div class="t" style="left:54.5px;top:99.0px;font-size:22.5px;color:#000;">-0.127512</div>
<div class="t" style="left:193.5px;top:99.0px;font-size:22.5px;color:#000;">0.159175</div>
<div class="t" style="left:893.5px;top:99.0px;font-size:22.5px;color:#000;">0....</div>
<div class="a" style="left:1028.6px;top:90.0px;width:41.0px;height:35.0px;background:#fbfbfb;border:1px solid #d6d6d6;border-radius:5px"><svg width="19" height="19" viewBox="0 0 19 19" style="position:absolute;left:12px;top:8px"><path d="M4 2.5 L14 16 M15 2.5 L3 16" stroke="#5a1822" stroke-width="5" stroke-linecap="square"/><path d="M4.5 3.5 L13.5 15 M14.5 3.5 L3.5 15" stroke="#c83a4a" stroke-width="2.6" stroke-linecap="square"/></svg></div>
<div class="t" style="left:10.0px;top:139.0px;font-size:22.5px;color:#000;">A2</div>
<div class="t" style="left:54.5px;top:139.0px;font-size:22.5px;color:#000;">-0.006046</div>
<div class="t" style="left:193.5px;top:139.0px;font-size:22.5px;color:#000;">0.144118</div>
<div class="t" style="left:893.5px;top:139.0px;font-size:22.5px;color:#000;">0.00137554</div>
<div class="t" style="left:275.0px;width:600px;text-align:right;top:139.0px;font-size:22.5px;color:#000;">36</div>
<div class="a" style="left:1028.6px;top:130.0px;width:41.0px;height:35.0px;background:#fbfbfb;border:1px solid #d6d6d6;border-radius:5px"><svg width="19" height="19" viewBox="0 0 19 19" style="position:absolute;left:12px;top:8px"><path d="M4 2.5 L14 16 M15 2.5 L3 16" stroke="#5a1822" stroke-width="5" stroke-linecap="square"/><path d="M4.5 3.5 L13.5 15 M14.5 3.5 L3.5 15" stroke="#c83a4a" stroke-width="2.6" stroke-linecap="square"/></svg></div>
<div class="t" style="left:10.0px;top:179.0px;font-size:22.5px;color:#000;">A3</div>
<div class="t" style="left:54.5px;top:179.0px;font-size:22.5px;color:#000;">0.151279</div>
<div class="t" style="left:193.5px;top:179.0px;font-size:22.5px;color:#000;">0.160076</div>
<div class="t" style="left:893.5px;top:179.0px;font-size:22.5px;color:#000;">0....</div>
<div class="a" style="left:1028.6px;top:170.0px;width:41.0px;height:35.0px;background:#fbfbfb;border:1px solid #d6d6d6;border-radius:5px"><svg width="19" height="19" viewBox="0 0 19 19" style="position:absolute;left:12px;top:8px"><path d="M4 2.5 L14 16 M15 2.5 L3 16" stroke="#5a1822" stroke-width="5" stroke-linecap="square"/><path d="M4.5 3.5 L13.5 15 M14.5 3.5 L3.5 15" stroke="#c83a4a" stroke-width="2.6" stroke-linecap="square"/></svg></div>
<div class="t" style="left:10.0px;top:219.0px;font-size:22.5px;color:#000;">A4</div>
<div class="t" style="left:54.5px;top:219.0px;font-size:22.5px;color:#000;">0.093052</div>
<div class="t" style="left:193.5px;top:219.0px;font-size:22.5px;color:#000;">0.132724</div>
<div class="t" style="left:893.5px;top:219.0px;font-size:22.5px;color:#000;">0.00129451</div>
<div class="t" style="left:275.0px;width:600px;text-align:right;top:219.0px;font-size:22.5px;color:#000;">3...</div>
<div class="a" style="left:1028.6px;top:210.0px;width:41.0px;height:35.0px;background:#fbfbfb;border:1px solid #d6d6d6;border-radius:5px"><svg width="19" height="19" viewBox="0 0 19 19" style="position:absolute;left:12px;top:8px"><path d="M4 2.5 L14 16 M15 2.5 L3 16" stroke="#5a1822" stroke-width="5" stroke-linecap="square"/><path d="M4.5 3.5 L13.5 15 M14.5 3.5 L3.5 15" stroke="#c83a4a" stroke-width="2.6" stroke-linecap="square"/></svg></div>
</div>
<div class="a" style="left:1585.0px;top:421.5px;width:43.0px;height:41.0px;background:#fbfbfb;border:1px solid #c8c8c8;border-radius:6px"></div>
<div class="a" style="left:1281.0px;top:426.0px;width:292.0px;height:32.0px;background:#ffff00"></div>
<div class="chk" style="left:1281.0px;top:428.0px"><svg width="26" height="26" style="position:absolute;left:0;top:0"><path d="M6.5 13.5 L11 18 L19.5 8.5" fill="none" stroke="#fff" stroke-width="1.8" stroke-linecap="round" stroke-linejoin="round"/></svg></div>
<div class="t" style="left:1317.5px;top:432.0px;font-size:22.5px;color:#000;">show &#8217;reference&#8217; entities</div>
<div class="clip" style="left:1281px;top:475.8px;width:1156px;height:242px;background:#fff;border:1px solid #8b8b95">
<div class="a" style="left:1120.0px;top:-1.0px;width:35.0px;height:242.0px;background:#f0f0f0"></div>
<div class="a" style="left:1127.3px;top:34.3px;width:19.0px;height:136.0px;background:#8a8a8a"></div>
<div class="a" style="left:46.0px;top:-1.0px;width:1.0px;height:242.0px;background:#dcdcdc"></div>
<div class="a" style="left:185.5px;top:-1.0px;width:1.0px;height:242.0px;background:#dcdcdc"></div>
<div class="a" style="left:325.0px;top:-1.0px;width:1.0px;height:242.0px;background:#dcdcdc"></div>
<div class="a" style="left:465.0px;top:-1.0px;width:1.0px;height:242.0px;background:#dcdcdc"></div>
<div class="a" style="left:605.5px;top:-1.0px;width:1.0px;height:242.0px;background:#dcdcdc"></div>
<div class="a" style="left:745.0px;top:-1.0px;width:1.0px;height:242.0px;background:#dcdcdc"></div>
<div class="a" style="left:885.5px;top:-1.0px;width:1.0px;height:242.0px;background:#dcdcdc"></div>
<div class="a" style="left:1026.0px;top:-1.0px;width:1.0px;height:242.0px;background:#dcdcdc"></div>
<div class="a" style="left:1072.0px;top:-1.0px;width:1.0px;height:242.0px;background:#dcdcdc"></div>
<div class="a" style="left:46.0px;top:86.2px;width:1026.0px;height:1.0px;background:#d8d8d8"></div>
<div class="a" style="left:46.0px;top:126.2px;width:1026.0px;height:1.0px;background:#d8d8d8"></div>
<div class="a" style="left:46.0px;top:166.2px;width:1026.0px;height:1.0px;background:#d8d8d8"></div>
<div class="a" style="left:46.0px;top:206.2px;width:1026.0px;height:1.0px;background:#d8d8d8"></div>
<div class="t" style="left:-183.0px;width:600px;text-align:center;top:15.0px;font-size:22.5px;color:#000;">X</div>
<div class="t" style="left:-43.5px;width:600px;text-align:center;top:15.0px;font-size:22.5px;color:#000;">Y</div>
<div class="t" style="left:657.0px;width:600px;text-align:center;top:15.0px;font-size:22.5px;color:#000;">Error</div>
<div class="t" style="left:840.0px;top:15.0px;font-size:22.5px;color:#000;">Z</div>
<div class="t" style="left:334.0px;top:219.0px;font-size:22.5px;color:#000;">0.146020</div>
<div class="t" style="left:474.0px;top:219.0px;font-size:22.5px;color:#000;">0.00037043</div>
<div class="t" style="left:614.0px;top:219.0px;font-size:22.5px;color:#000;">0....</div>
<div class="t" style="left:10.0px;top:59.0px;font-size:22.5px;color:#000;">R0</div>
<div class="t" style="left:54.5px;top:59.0px;font-size:22.5px;color:#000;">-0.176064</div>
<div class="t" style="left:193.5px;top:59.0px;font-size:22.5px;color:#000;">0.035947</div>
<div class="t" style="left:893.5px;top:59.0px;font-size:22.5px;color:#000;">0....</div>
<div class="t" style="left:275.0px;width:600px;text-align:right;top:59.0px;font-size:22.5px;color:#000;">9...</div>
<div class="a" style="left:1028.6px;top:50.0px;width:41.0px;height:35.0px;background:#fbfbfb;border:1px solid #d6d6d6;border-radius:5px"><svg width="19" height="19" viewBox="0 0 19 19" style="position:absolute;left:12px;top:8px"><path d="M4 2.5 L14 16 M15 2.5 L3 16" stroke="#5a1822" stroke-width="5" stroke-linecap="square"/><path d="M4.5 3.5 L13.5 15 M14.5 3.5 L3.5 15" stroke="#c83a4a" stroke-width="2.6" stroke-linecap="square"/></svg></div>
<div class="t" style="left:10.0px;top:99.0px;font-size:22.5px;color:#000;">R1</div>
<div class="t" style="left:54.5px;top:99.0px;font-size:22.5px;color:#000;">-0.124565</div>
<div class="t" style="left:193.5px;top:99.0px;font-size:22.5px;color:#000;">0.026596</div>
<div class="t" style="left:893.5px;top:99.0px;font-size:22.5px;color:#000;">0....</div>
<div class="a" style="left:1028.6px;top:90.0px;width:41.0px;height:35.0px;background:#fbfbfb;border:1px solid #d6d6d6;border-radius:5px"><svg width="19" height="19" viewBox="0 0 19 19" style="position:absolute;left:12px;top:8px"><path d="M4 2.5 L14 16 M15 2.5 L3 16" stroke="#5a1822" stroke-width="5" stroke-linecap="square"/><path d="M4.5 3.5 L13.5 15 M14.5 3.5 L3.5 15" stroke="#c83a4a" stroke-width="2.6" stroke-linecap="square"/></svg></div>
<div class="t" style="left:10.0px;top:139.0px;font-size:22.5px;color:#000;">R2</div>
<div class="t" style="left:54.5px;top:139.0px;font-size:22.5px;color:#000;">-0.002822</div>
<div class="t" style="left:193.5px;top:139.0px;font-size:22.5px;color:#000;">0.010242</div>
<div class="t" style="left:893.5px;top:139.0px;font-size:22.5px;color:#000;">0.00137554</div>
<div class="t" style="left:275.0px;width:600px;text-align:right;top:139.0px;font-size:22.5px;color:#000;">6</div>
<div class="a" style="left:1028.6px;top:130.0px;width:41.0px;height:35.0px;background:#fbfbfb;border:1px solid #d6d6d6;border-radius:5px"><svg width="19" height="19" viewBox="0 0 19 19" style="position:absolute;left:12px;top:8px"><path d="M4 2.5 L14 16 M15 2.5 L3 16" stroke="#5a1822" stroke-width="5" stroke-linecap="square"/><path d="M4.5 3.5 L13.5 15 M14.5 3.5 L3.5 15" stroke="#c83a4a" stroke-width="2.6" stroke-linecap="square"/></svg></div>
<div class="t" style="left:10.0px;top:179.0px;font-size:22.5px;color:#000;">R3</div>
<div class="t" style="left:54.5px;top:179.0px;font-size:22.5px;color:#000;">0.154300</div>
<div class="t" style="left:193.5px;top:179.0px;font-size:22.5px;color:#000;">0.024959</div>
<div class="t" style="left:893.5px;top:179.0px;font-size:22.5px;color:#000;">0....</div>
<div class="a" style="left:1028.6px;top:170.0px;width:41.0px;height:35.0px;background:#fbfbfb;border:1px solid #d6d6d6;border-radius:5px"><svg width="19" height="19" viewBox="0 0 19 19" style="position:absolute;left:12px;top:8px"><path d="M4 2.5 L14 16 M15 2.5 L3 16" stroke="#5a1822" stroke-width="5" stroke-linecap="square"/><path d="M4.5 3.5 L13.5 15 M14.5 3.5 L3.5 15" stroke="#c83a4a" stroke-width="2.6" stroke-linecap="square"/></svg></div>
<div class="t" style="left:10.0px;top:219.0px;font-size:22.5px;color:#000;">R4</div>
<div class="t" style="left:54.5px;top:219.0px;font-size:22.5px;color:#000;">0.095488</div>
<div class="t" style="left:193.5px;top:219.0px;font-size:22.5px;color:#000;">-0.003147</div>
<div class="t" style="left:893.5px;top:219.0px;font-size:22.5px;color:#000;">0.00129451</div>
<div class="t" style="left:275.0px;width:600px;text-align:right;top:219.0px;font-size:22.5px;color:#000;">...</div>
<div class="a" style="left:1028.6px;top:210.0px;width:41.0px;height:35.0px;background:#fbfbfb;border:1px solid #d6d6d6;border-radius:5px"><svg width="19" height="19" viewBox="0 0 19 19" style="position:absolute;left:12px;top:8px"><path d="M4 2.5 L14 16 M15 2.5 L3 16" stroke="#5a1822" stroke-width="5" stroke-linecap="square"/><path d="M4.5 3.5 L13.5 15 M14.5 3.5 L3.5 15" stroke="#c83a4a" stroke-width="2.6" stroke-linecap="square"/></svg></div>
</div>
<div class="a" style="left:1281.0px;top:736.4px;width:26.0px;height:26.0px;border:1.5px solid #6a6a6a;border-radius:5px;background:#f3f3f3"></div>
<div class="t" style="left:1317.5px;top:739.8px;font-size:22.5px;color:#000;">adjust scale</div>
<div class="chk" style="left:1281.0px;top:790.4px"><svg width="26" height="26" style="position:absolute;left:0;top:0"><path d="M6.5 13.5 L11 18 L19.5 8.5" fill="none" stroke="#fff" stroke-width="1.8" stroke-linecap="round" stroke-linejoin="round"/></svg></div>
<div class="t" style="left:1317.5px;top:793.5px;font-size:22.5px;color:#000;">auto update zoom</div>
<div class="t" style="left:1959.4px;top:740.2px;font-size:22.5px;color:#000;">Rotation</div>
<div class="a" style="left:2055.3px;top:730.4px;width:109.0px;height:37.0px;background:#f3f3f3;border:1px solid #d0d0d0;border-radius:3px"><svg width="20" height="12" style="position:absolute;left:10px;top:13px"><path d="M3 2 L10 9 L17 2" fill="none" stroke="#555" stroke-width="1.4"/></svg></div>
<div class="t" style="left:1556.0px;width:600px;text-align:right;top:740.0px;font-size:22.5px;color:#000;">XYZ</div>
<div class="chk" style="left:2197.0px;top:736.0px"><svg width="26" height="26" style="position:absolute;left:0;top:0"><path d="M6.5 13.5 L11 18 L19.5 8.5" fill="none" stroke="#fff" stroke-width="1.8" stroke-linecap="round" stroke-linejoin="round"/></svg></div>
<div class="t" style="left:2233.5px;top:740.0px;font-size:22.5px;color:#000;">Tx</div>
<div class="chk" style="left:2281.0px;top:736.0px"><svg width="26" height="26" style="position:absolute;left:0;top:0"><path d="M6.5 13.5 L11 18 L19.5 8.5" fill="none" stroke="#fff" stroke-width="1.8" stroke-linecap="round" stroke-linejoin="round"/></svg></div>
<div class="t" style="left:2317.5px;top:740.0px;font-size:22.5px;color:#000;">Ty</div>
<div class="chk" style="left:2365.0px;top:736.0px"><svg width="26" height="26" style="position:absolute;left:0;top:0"><path d="M6.5 13.5 L11 18 L19.5 8.5" fill="none" stroke="#fff" stroke-width="1.8" stroke-linecap="round" stroke-linejoin="round"/></svg></div>
<div class="t" style="left:2401.5px;top:740.0px;font-size:22.5px;color:#000;">Tz</div>
<div class="a" style="left:2152.3px;top:783.5px;width:73.0px;height:41.0px;background:#fbfbfb;border:1px solid #d2d2d2;border-radius:5px"></div>
<div class="t" style="left:1889.0px;width:600px;text-align:center;top:792.0px;font-size:22.5px;color:#000;">align</div>
<div class="a" style="left:2240.3px;top:787.0px;width:79.0px;height:34.0px;background:#fbfbfb;border:1px solid #d2d2d2;border-radius:5px"></div>
<div class="t" style="left:1979.8px;width:600px;text-align:center;top:792.0px;font-size:22.5px;color:#000;">reset</div>
<div class="a" style="left:2334.2px;top:783.5px;width:43.0px;height:41.0px;background:#fbfbfb;border:1px solid #d2d2d2;border-radius:5px"><svg width="43" height="41" style="position:absolute;left:-1px;top:-1px"><path d="M8 22 L16 30 L32 11" fill="none" stroke="#1a8a1a" stroke-width="5.5" stroke-linejoin="round"/></svg></div>
<div class="a" style="left:2392.0px;top:783.5px;width:43.6px;height:41.0px;background:#fbfbfb;border:1px solid #d2d2d2;border-radius:5px"><svg width="19" height="19" viewBox="0 0 19 19" style="position:absolute;left:12px;top:11px"><path d="M4 2.5 L14 16 M15 2.5 L3 16" stroke="#5a1822" stroke-width="5" stroke-linecap="square"/><path d="M4.5 3.5 L13.5 15 M14.5 3.5 L3.5 15" stroke="#c83a4a" stroke-width="2.6" stroke-linecap="square"/></svg></div>
<div class="clip" style="left:1587px;top:168.3px;width:545.5px;height:545.2px;border-radius:16px;background:#fff;border:2px solid #b4b4b4;box-shadow:0 18px 60px rgba(0,0,0,0.30),0 3px 10px rgba(0,0,0,0.12)">
<div class="a" style="left:-2.0px;top:-2.0px;width:545.5px;height:57.0px;background:#f3f3f3"></div>
<div class="a" style="left:-2.0px;top:453.7px;width:545.5px;height:100.0px;background:#f0f0f0;border-top:1px solid #e8e8e8"></div>
<div class="a" style="left:14.0px;top:16.7px;width:29.0px;height:22.0px;"><svg width="32" height="26" style="position:absolute;left:0;top:0"><path d="M17 3 Q11 1 6 4 Q2 7 2 11.5 Q2 16 6 19 Q11 22 17 20" fill="none" stroke="#1f6fae" stroke-width="3.2"/><path d="M27 6 Q24 2.5 19 3 Q12 3.5 10.5 11 Q12 19.5 19 20 Q24 20.5 27 17" fill="none" stroke="#1f6fae" stroke-width="3.2"/></svg></div>
<div class="t" style="left:52.0px;top:16.0px;font-size:24px;color:#8a8a8a;">Align info</div>
<div class="a" style="left:498.5px;top:16.7px;width:21.0px;height:21.0px;"><svg width="21" height="21" style="position:absolute;left:0;top:0"><path d="M1 1 L20 20 M20 1 L1 20" stroke="#777" stroke-width="1.4"/></svg></div>
<div class="a" style="left:22.0px;top:77.7px;width:64.0px;height:64.0px;"><svg width="64" height="64" style="position:absolute;left:0;top:0"><defs><linearGradient id="ig" x1="0" y1="0" x2="1" y2="1"><stop offset="0" stop-color="#2a9ae6"/><stop offset="1" stop-color="#0062c4"/></linearGradient></defs><circle cx="32" cy="32" r="32" fill="url(#ig)"/><rect x="29.5" y="18" width="5" height="5" fill="#fff"/><rect x="29.5" y="27" width="5" height="22" fill="#fff"/></svg></div>
<div class="t" style="left:125.0px;top:84.4px;font-size:23px;color:#000;">Final RMS: 0.000934652</div>
<div class="t" style="left:125.0px;top:148.5px;font-size:23px;color:#000;">Transformation matrix</div>
<div class="t" style="left:125.0px;top:340.9px;font-size:23px;color:#000;">Scale: fixed (1.0)</div>
<div class="t" style="left:125.0px;top:404.5px;font-size:23px;color:#000;">Refer to Console (F8) for more details</div>
<div class="a" style="left:125.0px;top:128.7px;width:151.0px;height:1.5px;background:repeating-linear-gradient(90deg,#000 0 7px,transparent 7px 9.4px)"></div>
<div class="a" style="left:125.0px;top:321.2px;width:151.0px;height:1.5px;background:repeating-linear-gradient(90deg,#000 0 7px,transparent 7px 9.4px)"></div>
<div class="a" style="left:125.0px;top:384.7px;width:151.0px;height:1.5px;background:repeating-linear-gradient(90deg,#000 0 7px,transparent 7px 9.4px)"></div>
<div class="t" style="left:125.0px;top:180.0px;font-size:23px;color:#000;">1.000</div>
<div class="t" style="left:212.3px;top:180.0px;font-size:23px;color:#000;">0.009</div>
<div class="t" style="left:300.8px;top:180.0px;font-size:23px;color:#000;">-0.002</div>
<div class="t" style="left:388.2px;top:180.0px;font-size:23px;color:#000;">0.002</div>
<div class="t" style="left:125.0px;top:212.0px;font-size:23px;color:#000;">-0.009</div>
<div class="t" style="left:212.3px;top:212.0px;font-size:23px;color:#000;">0.997</div>
<div class="t" style="left:300.8px;top:212.0px;font-size:23px;color:#000;">0.075</div>
<div class="t" style="left:388.2px;top:212.0px;font-size:23px;color:#000;">-0.148</div>
<div class="t" style="left:125.0px;top:244.0px;font-size:23px;color:#000;">0.003</div>
<div class="t" style="left:212.3px;top:244.0px;font-size:23px;color:#000;">-0.075</div>
<div class="t" style="left:300.8px;top:244.0px;font-size:23px;color:#000;">0.997</div>
<div class="t" style="left:388.2px;top:244.0px;font-size:23px;color:#000;">-0.034</div>
<div class="t" style="left:125.0px;top:276.0px;font-size:23px;color:#000;">0.000</div>
<div class="t" style="left:212.3px;top:276.0px;font-size:23px;color:#000;">0.000</div>
<div class="t" style="left:300.8px;top:276.0px;font-size:23px;color:#000;">0.000</div>
<div class="t" style="left:388.2px;top:276.0px;font-size:23px;color:#000;">1.000</div>
<div class="a" style="left:371.6px;top:473.7px;width:146.5px;height:44.5px;background:#fdfdfd;border:1px solid #d0d0d0;border-bottom-color:#b5b5b5;border-radius:5px"></div>
<div class="t" style="left:145.0px;width:600px;text-align:center;top:485.2px;font-size:23px;color:#000;">OK</div>
</div>
<div class="a" style="left:1928.6px;top:600.5px;width:214.7px;height:117.8px;border:20px solid #ff0000"></div>
</body></html>
